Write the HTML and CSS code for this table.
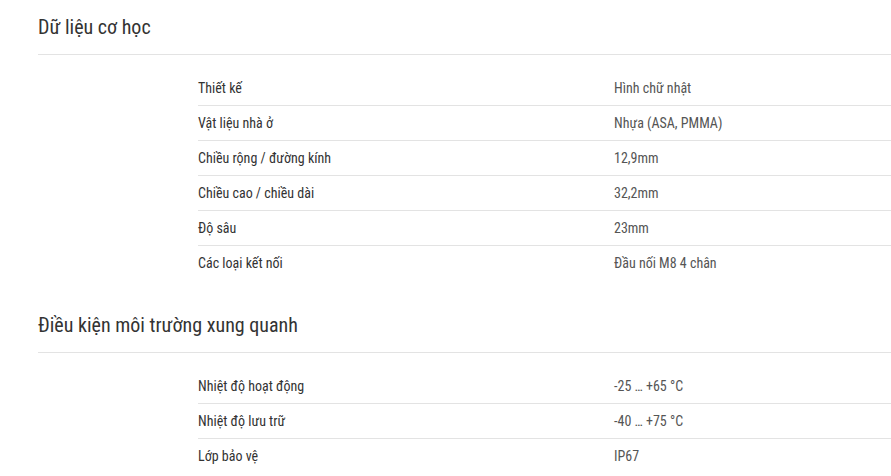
FILE: index.html
```html
<!DOCTYPE html>
<html lang="vi">
<head>
<meta charset="utf-8">
<link rel="stylesheet" href="styles.css">
</head>
<body>
<div class="page">
  <section class="section">
    <h2 class="title">Dữ liệu cơ học</h2>
    <div class="table">
      <div class="row"><div class="label">Thiết kế</div><div class="value">Hình chữ nhật</div></div>
      <div class="row"><div class="label">Vật liệu nhà ở</div><div class="value">Nhựa (ASA, PMMA)</div></div>
      <div class="row"><div class="label">Chiều rộng / đường kính</div><div class="value">12,9mm</div></div>
      <div class="row"><div class="label">Chiều cao / chiều dài</div><div class="value">32,2mm</div></div>
      <div class="row"><div class="label">Độ sâu</div><div class="value">23mm</div></div>
      <div class="row"><div class="label">Các loại kết nối</div><div class="value">Đầu nối M8 4 chân</div></div>
    </div>
  </section>
  <section class="section">
    <h2 class="title">Điều kiện môi trường xung quanh</h2>
    <div class="table">
      <div class="row"><div class="label">Nhiệt độ hoạt động</div><div class="value">-25 … +65 °C</div></div>
      <div class="row"><div class="label">Nhiệt độ lưu trữ</div><div class="value">-40 … +75 °C</div></div>
      <div class="row"><div class="label">Lớp bảo vệ</div><div class="value">IP67</div></div>
    </div>
  </section>
</div>
</body>
</html>
```
FILE: styles.css
```css
html, body {
  margin: 0;
  padding: 0;
  background: #fff;
}
body {
  font-family: "Roboto Condensed", Roboto, "Liberation Sans", sans-serif;
  font-stretch: condensed;
  color: #333;
  overflow: hidden;
}
.page {
  padding-left: 38px;
}
.section {
  padding-bottom: 18px;
}
.title {
  margin: 0;
  font-size: 20px;
  font-weight: 400;
  line-height: 26px;
  padding-top: 14px;
  padding-bottom: 14px;
  border-bottom: 1px solid #e3e3e3;
  color: #333;
}
.table {
  margin-left: 160px;
  padding-top: 16px;
}
.row {
  display: grid;
  grid-template-columns: 416px 1fr;
  height: 34px;
  align-items: center;
  font-size: 14px;
  border-bottom: 1px solid #e3e3e3;
}
.row:last-child {
  border-bottom: none;
}
.label {
  color: #333;
}
.value {
  color: #555;
}
```
